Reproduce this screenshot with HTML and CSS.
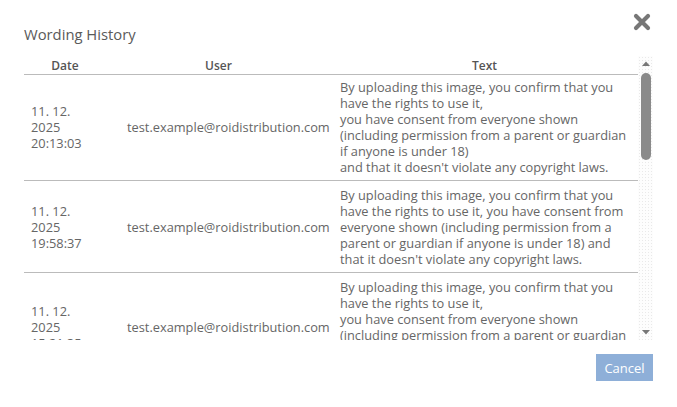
FILE: index.html
```html
<!DOCTYPE html>
<html lang="en">
<head>
<meta charset="utf-8">
<title>Wording History</title>
<link rel="stylesheet" href="styles.css">
</head>
<body>
<div class="dialog">
  <div class="dialog-head">
    <h2 class="dialog-title">Wording History</h2>
    <button class="close-btn" aria-label="Close">
      <svg width="18" height="18" viewBox="0 0 18 18">
        <path d="M3 3 L15 15 M15 3 L3 15" stroke="#777" stroke-width="4.2" stroke-linecap="round" fill="none"/>
      </svg>
    </button>
  </div>

  <div class="history-frame">
    <div class="history-scroll">
      <table class="history">
        <colgroup>
          <col class="col-date">
          <col class="col-user">
          <col class="col-text">
        </colgroup>
        <thead>
          <tr><th>Date</th><th>User</th><th>Text</th></tr>
        </thead>
        <tbody>
          <tr>
            <td class="c-date">11. 12. 2025 20:13:03</td>
            <td class="c-user">test.example@roidistribution.com</td>
            <td class="c-text">By uploading this image, you confirm that you have the rights to use it,<br>you have consent from everyone shown<br>(including permission from a parent or guardian if anyone is under 18)<br>and that it doesn't violate any copyright laws.</td>
          </tr>
          <tr>
            <td class="c-date">11. 12. 2025 19:58:37</td>
            <td class="c-user">test.example@roidistribution.com</td>
            <td class="c-text">By uploading this image, you confirm that you have the rights to use it, you have consent from everyone shown (including permission from a parent or guardian if anyone is under 18) and that it doesn't violate any copyright laws.</td>
          </tr>
          <tr>
            <td class="c-date">11. 12. 2025 15:21:35</td>
            <td class="c-user">test.example@roidistribution.com</td>
            <td class="c-text">By uploading this image, you confirm that you have the rights to use it,<br>you have consent from everyone shown<br>(including permission from a parent or guardian if anyone is under 18)<br>and that it doesn't violate any copyright laws.</td>
          </tr>
        </tbody>
      </table>
    </div>

    <div class="scrollbar" aria-hidden="true">
      <div class="sb-btn">
        <svg width="8" height="5" viewBox="0 0 8 5"><path d="M0 5 L4 0.5 L8 5 Z" fill="#777"/></svg>
      </div>
      <div class="sb-track"><div class="sb-thumb"></div></div>
      <div class="sb-btn">
        <svg width="8" height="5" viewBox="0 0 8 5"><path d="M0 0 L8 0 L4 4.5 Z" fill="#777"/></svg>
      </div>
    </div>
  </div>

  <div class="dialog-foot">
    <button class="cancel-btn">Cancel</button>
  </div>
</div>
</body>
</html>
```

FILE: styles.css
```css
html, body {
  margin: 0;
  padding: 0;
  background: #fff;
}

body {
  font-family: "Open Sans", Lato, sans-serif;
  color: #666;
}

.dialog {
  width: 677px;
  height: 407px;
  box-sizing: border-box;
  padding: 12px 24px 0 24px;
}

.dialog-head {
  display: flex;
  justify-content: space-between;
  align-items: flex-start;
  height: 44px;
}

.dialog-title {
  margin: 13px 0 0 0;
  font-size: 14.8px;
  font-weight: normal;
  color: #5a5a5a;
  line-height: 18px;
}

.close-btn {
  border: 0;
  background: none;
  padding: 0;
  margin: 1px 2px 0 0;
  width: 18px;
  height: 18px;
  cursor: pointer;
}

.close-btn svg {
  display: block;
}

/* list of wording revisions with its scrollbar */
.history-frame {
  display: flex;
  height: 284px;
}

.history-scroll {
  flex: 1;
  min-width: 0;
  overflow: hidden;
}

.scrollbar {
  width: 15px;
  display: flex;
  flex-direction: column;
  background-color: #fdfdfd;
  background-image: radial-gradient(#e9e9e9 0.6px, transparent 0.8px);
  background-size: 3px 3px;
}

.sb-btn {
  height: 15px;
  display: flex;
  align-items: center;
  justify-content: center;
}

.sb-btn svg {
  display: block;
}

.sb-track {
  flex: 1;
  padding-top: 2px;
}

.sb-thumb {
  width: 10px;
  height: 87px;
  margin-left: 3px;
  border-radius: 5px;
  background: #8a8a8a;
}

.history {
  width: 100%;
  border-collapse: collapse;
  table-layout: fixed;
  font-size: 12.8px;
}

.col-date { width: 82px; }
.col-user { width: 225px; }

.history th {
  font-size: 12px;
  font-weight: 600;
  color: #555;
  text-align: center;
  height: 18px;
  padding: 0;
  border-bottom: 1px solid #bbb;
}

.history td {
  line-height: 16px;
  color: #666;
  vertical-align: middle;
  border-bottom: 1px solid #bbb;
  padding: 6px 7px 5px;
}

.history tbody tr:first-child td {
  padding-top: 4px;
  padding-bottom: 5px;
}

.history .c-user {
  padding-left: 21px;
  padding-right: 2px;
  white-space: nowrap;
}

.history .c-text {
  padding-left: 9px;
  padding-right: 10px;
}

.dialog-foot {
  display: flex;
  justify-content: flex-end;
  padding-top: 14px;
}

.cancel-btn {
  border: 0;
  width: 57px;
  height: 27px;
  background: #8eafd8;
  color: #fff;
  font-family: "Open Sans", Lato, sans-serif;
  font-size: 13px;
  padding: 0;
  cursor: pointer;
}
```
